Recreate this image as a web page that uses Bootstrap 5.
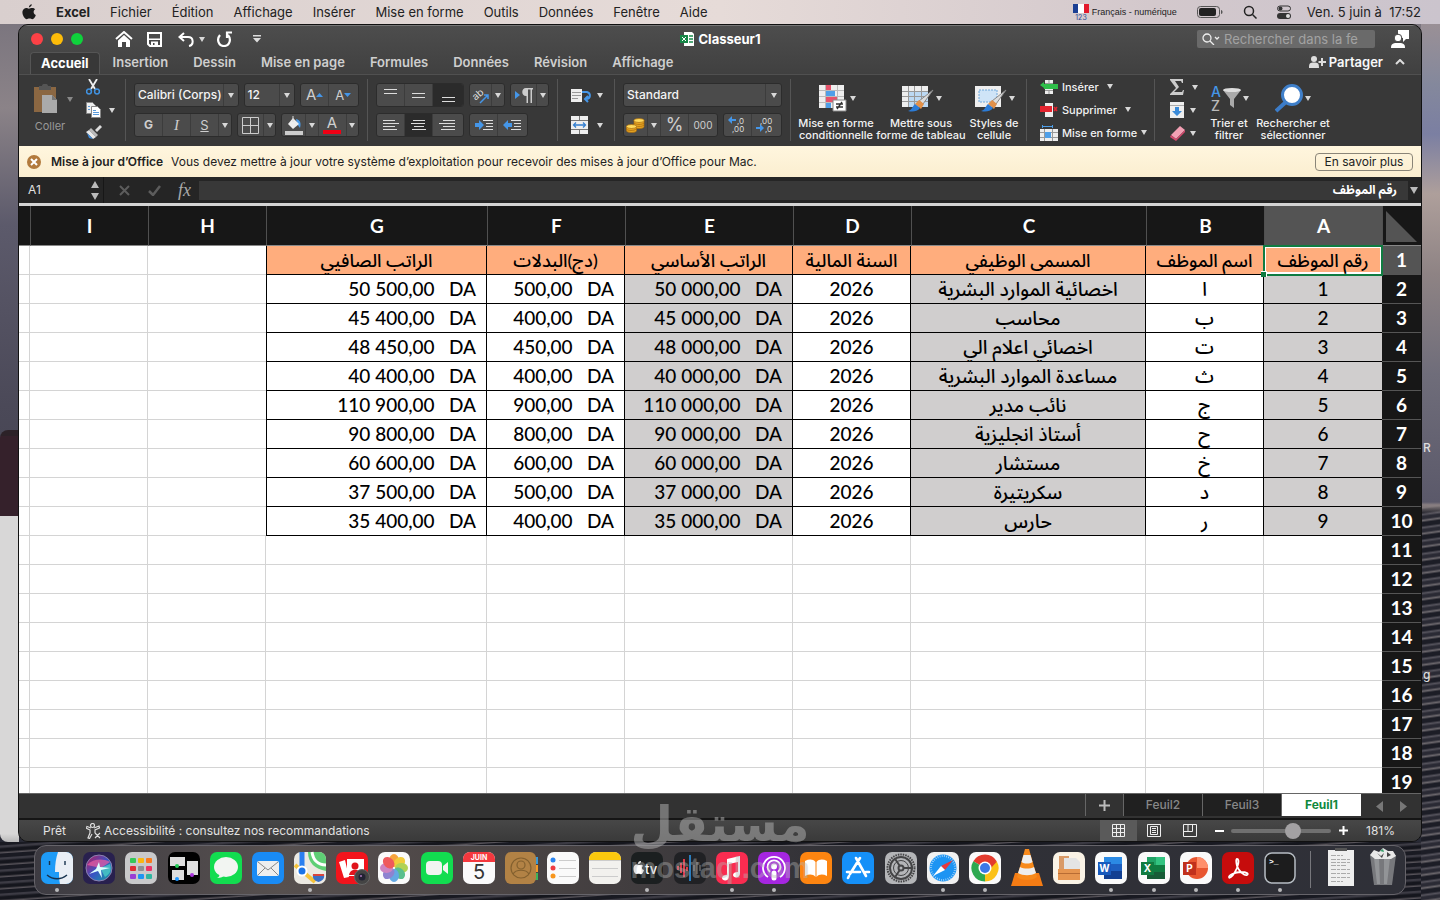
<!DOCTYPE html>
<html lang="fr">
<head>
<meta charset="utf-8">
<meta name="viewport" content="width=device-width, initial-scale=1">
<title>Classeur1</title>
<link href="https://cdn.jsdelivr.net/npm/bootstrap@5.3.0/dist/css/bootstrap.min.css" rel="stylesheet">
<script src="https://cdn.jsdelivr.net/npm/bootstrap@5.3.0/dist/js/bootstrap.bundle.min.js"></script>
<style>
body{font-family:Inter,"Liberation Sans",sans-serif;font-size:13px;line-height:16px;color:#222;height:100vh;overflow:hidden;
 background:linear-gradient(#77727c 0,#8b8388 12%,#5c5a6b 25%,#4b4958 45%,#3d3d4b 70%,#30303c 90%,#262833 94%,#17181f 100%)}
button{border:0;background:none;padding:0;color:inherit;font:inherit}
a{color:inherit;text-decoration:none}
svg{display:block;flex:none}
.menubar{height:24px;background:linear-gradient(90deg,#d9cfce,#e6dbd8 50%,#d3c8cc 80%,#cbc4cd);padding:0 19px 0 22px;gap:20px}
.lang{font-size:9px;font-family:"Liberation Sans",sans-serif}
.side-l,.side-r{position:absolute;z-index:-1;width:19px}
.side-l{left:0;top:430px;bottom:58px;border-radius:8px 0 0 8px;background:linear-gradient(#2c2228 0 6px,#35212b 6px 86px,#d8d7d7 86px 98%,#b9b9b9)}
.side-r{right:0;top:24px;bottom:0;background:linear-gradient(#9a9096 0,#84889c 60px,#7b7fa2 110px,#ae9f9b 170px,#8e8384 250px,#6f6d7a 350px,#5b596a 478px,#8a8082 481px,transparent 490px),repeating-linear-gradient(172deg,#1c1d26 0 3px,#55535c 5px,#2a2a34 7px 9px,#6b676c 11px,#1c1d26 13px);color:#ddd;font-size:12px;font-weight:500}
.side-r span{position:absolute;left:2px}
.sea{position:absolute;z-index:-2;left:0;right:0;bottom:0;height:58px;background:repeating-linear-gradient(176deg,#191a22 0 3px,#3c3b44 4px 5px,#15161d 7px 9px,#58545a 11px,#1c1d26 12px)}
.win{margin:0 18px;border:1px solid #111;border-radius:10px;overflow:hidden;background:#383838;color:#e8e8e8;min-height:0}
.head-a{background:linear-gradient(#4d4d4d,#404040);border-top:1px solid #777;border-bottom:1px solid #505050}
.title-row{height:25px;padding:1px 12px 0 12px}
.side{flex:1 0 0}
.light{width:12px;height:12px;border-radius:50%;margin-right:8px}
.tab-row{height:23px;padding:0 0 2px 11px;gap:25px;font-weight:600;color:#cfcfcf}
.tab-row .on{background:#383838;color:#fff;border:1px solid #555;border-bottom:0;border-radius:4px 4px 0 0;height:22px;padding:1px 10px 2px 10px;margin-right:-12px;margin-bottom:-3px;font-weight:700}
.search{width:178px;height:18px;background:#6a6a6a;border-radius:2px;padding-left:5px;margin-right:16px}
.search input{border:0;background:none;outline:0;padding:0;width:134px;font-size:13px;color:#fff;line-height:16px}
.search input::placeholder{color:#a2a2a2;opacity:1}
.ribbon{height:71px;background:#383838;font-size:12px}
.grp{height:62px;margin-top:4px;border-right:1px solid #555;padding:4px 8px 0;flex:none}
.rowx{display:flex;gap:5px;margin-bottom:6px}
.box{display:flex;height:24px;background:#4b4b4b;border:1px solid #2c2c2c;border-radius:3px;overflow:hidden}
.box>*{display:flex;align-items:center;justify-content:center;border-right:1px solid #3c3c3c}
.box>*:last-child{border-right:0}
.b29{width:28px;flex:none}.b12{width:12px;flex:1}
.dark{background:#2b2b2b}
.combo{font-size:12px;font-weight:500;color:#f4f4f4;justify-content:flex-start!important;padding-left:3px;white-space:nowrap;min-width:0}
.car{width:0;height:0;border:3px solid transparent;border-top:5px solid #d8d8d8;border-bottom:0;flex:none}
.g{font-size:15px;color:#cfcfcf}
.big{font-size:11px;line-height:12px;font-weight:500;text-align:center;color:#f2f2f2;flex:none;margin-top:-4px;align-self:flex-start}
.big .pic{height:38px;display:flex;align-items:center;justify-content:center;gap:2px}
.lst{font-size:11px;font-weight:500;color:#f2f2f2}
.lst button{display:flex;align-items:center;height:23px;gap:4px;white-space:nowrap}
.msg{height:31px;background:linear-gradient(#fff6de,#fbeed0);color:#222;font-size:12px;padding:0 8px}
.more{border:1px solid #8a8578;border-radius:4px;height:18px;width:98px;font-size:12px;line-height:14px}
.fbar{height:29px;background:#252525;border-bottom:3px solid #d4d4d4}
.fbar .nm{width:85px;border-right:1px solid #171717;font-size:12px;padding:0 4px 0 9px;color:#e0e0e0}
.fbar .in{background:#383838;border:0;color:#fff;height:19px;min-width:0;font-family:Lato,"Noto Sans Arabic",sans-serif;font-size:12px;font-weight:700;padding:0 11px;outline:0}
.sheet{background:#fff;min-height:0;flex:1 1 0;overflow:hidden}
.xl{table-layout:fixed;width:100%;border-collapse:separate;border-spacing:0;font-family:Lato,"Noto Sans Arabic","DejaVu Sans",sans-serif;font-size:19px;font-weight:500;line-height:28px;color:#000}
.xl td{height:29px;padding:0;border-right:1px solid #d4d4d4;border-bottom:1px solid #d4d4d4;text-align:center;white-space:pre;overflow:hidden}
.xl td:nth-child(2){border-right:0}
.xl th{background:#171717;color:#fff;font-weight:700;text-align:center;padding:0;border-bottom:1px solid #555}
.xl thead th{height:40px;border-left:1px solid #505050;border-bottom:1px solid #888}
.xl thead th:last-child{border-left:0}
.xl .sel{background:#545454}
.xl .dat td:nth-child(-n+8){border-color:#000;line-height:28px}
.xl .dat td:nth-child(9){border-right:0}
.xl .dat td:nth-child(8){border-left:1px solid #000}
.xl .dat td:nth-child(2),.xl .dat td:nth-child(4),.xl .dat td:nth-child(6){background:#d0cece}
.xl .top td:nth-child(-n+8){background:#ffad7d!important;font-size:18px}
.xl .dat:not(.top) td:nth-child(n+6):nth-child(-n+8){direction:ltr;text-align:right;padding-right:10px}
.xl .dat:not(.top) td:nth-child(6){padding-right:8px}
.xl .top td.cur{outline:2px solid #107c41;outline-offset:-1px;box-shadow:inset 0 0 0 2px #fff;position:relative;overflow:visible}
.cur i{position:absolute;left:-3px;bottom:-3px;width:6px;height:6px;background:#107c41;border:1px solid #fff;border-width:1px 1px 0 0}
.tabs{height:27px;background:#323232;border-top:1px solid #666;border-bottom:2px solid #151515;font-size:12px;color:#888;font-weight:500}
.tabs>button{height:22px;width:79px;background:#202020;border-right:1px solid #666}
.stat{height:21px;background:linear-gradient(#474747,#3a3a3a);font-size:12px;color:#e2e2e2;padding-right:26px}
.rng{appearance:none;width:100px;height:4px;background:#707070;border-radius:2px;margin:0 8px 0 7px}
.rng::-webkit-slider-thumb{appearance:none;width:16px;height:16px;border-radius:50%;background:#a3a1a3}
.dock{height:50px;margin:3px 34px 5px;border:1px solid #66646a;border-radius:12px;background:linear-gradient(90deg,#3d3b42,#57504f 18%,#4a4444 35%,#303036 60%,#2f3038);padding-left:1px}
.app{flex:1 0 0;display:flex;flex-direction:column;align-items:center;padding-top:5px;height:48px}
.app.run::after{content:"";width:4px;height:4px;border-radius:50%;background:#b9b9bb;margin-top:3px}
.dk{width:104px;flex:none}
.wm{position:absolute;left:50%;width:200px;margin-left:-100px;text-align:center;color:#b5b5b5;opacity:.5;pointer-events:none}
.wm-a{bottom:45px;font:700 49px/60px "DejaVu Sans",sans-serif}
.wm-b{bottom:18px;font:700 29px/28px "Liberation Sans",sans-serif;opacity:.4}
</style>
</head>
<body class="d-flex flex-column position-relative">
<div class="sea"></div><div class="side-l"></div><div class="side-r"><span style="top:416px">R</span><span style="top:643px">g</span></div>

<nav class="menubar d-flex align-items-center flex-shrink-0">
 <svg width="14" height="16" viewBox="0 0 14 16"><path fill="#1c1c1c" d="M9.8.2c.1 1.6-1.300 3.200-2.900 3.200C6.800 1.800 8.300.4 9.800.2zM13.200 5.300c-2.400 1.500-1.900 4.900.6 5.700-.5 1.700-1.900 4.300-3.400 4.300-1.200 0-1.500-.7-2.900-.7s-1.800.7-2.900.7C2.200 15.300-2 7.600 2.200 4.700c1.900-1.300 3.600 0 4.700 0 1 0 4.200-1.900 6.300.6z"/></svg>
 <a href="#" class="fw-bold">Excel</a><a href="#">Fichier</a><a href="#">Édition</a><a href="#">Affichage</a><a href="#">Insérer</a><a href="#">Mise en forme</a><a href="#">Outils</a><a href="#">Données</a><a href="#">Fenêtre</a><a href="#">Aide</a>
 <div class="ms-auto d-flex align-items-center" style="gap:3px">
  <svg width="16" height="18" viewBox="0 0 16 18"><path fill="#1b3f94" d="M0 1h5v9H0z"/><path fill="#fff" d="M5 1h6v9H5z"/><path fill="#e3192c" d="M11 1h5v9h-5z"/><text x="8" y="17" font-size="7" text-anchor="middle" fill="#2c4a94">123</text></svg>
  <span class="lang">Français - numérique</span></div>
 <svg width="26" height="12" viewBox="0 0 26 12"><rect x=".5" y=".5" width="22" height="11" rx="3" fill="none" stroke="#555"/><rect x="2" y="2" width="17" height="8" rx="2" fill="#222"/><path fill="#555" d="M24 4c2 0 2 4 0 4z"/></svg>
 <svg width="14" height="14" viewBox="0 0 14 14" fill="none" stroke="#222" stroke-width="1.500"><circle cx="6" cy="6" r="4.500"/><path d="m9.500 9.500 4 4"/></svg>
 <svg width="14" height="14" viewBox="0 0 14 14"><rect x=".5" y="1" width="13" height="5" rx="2.500" fill="none" stroke="#333"/><circle cx="3.500" cy="3.500" r="2" fill="#333"/><rect y="8" width="14" height="6" rx="3" fill="#333"/><circle cx="11" cy="11" r="2" fill="#ddd"/></svg>
 <span style="margin-left:-4px">Ven. 5 juin à&nbsp; 17:52</span>
</nav>

<main class="win d-flex flex-column flex-grow-1">
 <header class="head-a flex-shrink-0">
  <div class="title-row d-flex align-items-center">
   <div class="side d-flex align-items-center">
    <span class="light" style="background:#fc4146"></span><span class="light" style="background:#fdbc09"></span><span class="light" style="background:#0fd23c"></span>
    <button style="margin-left:24px" aria-label="Accueil"><svg width="18" height="16" viewBox="0 0 18 16"><path fill="none" stroke="#fff" stroke-width="2" d="m1 8 8-7 8 7"/><path fill="#fff" d="M3 9.500 9 4l6 5.500V16h-4v-5H7v5H3z"/></svg></button>
    <button style="margin-left:14px" aria-label="Enregistrer"><svg width="15" height="15" viewBox="0 0 15 15"><path fill="none" stroke="#fff" stroke-width="2" d="M1 1h13v13H3l-2-2z"/><path fill="#fff" d="M1 6.500h13V8H1zM4 9.500h7V14H7.500v-3H6v3H4z"/></svg></button>
    <button class="d-flex align-items-center" style="margin-left:16px;gap:5px" aria-label="Annuler"><svg width="16" height="15" viewBox="0 0 16 15" fill="none" stroke="#fff" stroke-width="2"><path d="M6 1 1.500 5 6 9M2 5h8c6 0 6 8 1 9"/></svg><span class="car"></span></button>
    <button style="margin-left:12px" aria-label="Répéter"><svg width="16" height="16" viewBox="0 0 16 16" fill="none" stroke="#fff" stroke-width="2.200"><path d="M3 4c-4 5-1 11 4 11s8-6 4-11M15 1.500h-5V7"/></svg></button>
    <button style="margin-left:20px" aria-label="Personnaliser"><svg width="8" height="8" viewBox="0 0 8 8" fill="#ddd"><path d="M0 0h8v1.500H0zM0 3h8L4 7.500z"/></svg></button>
   </div>
   <div class="d-flex align-items-center fw-bold text-white" style="gap:5px"><svg width="14" height="14" viewBox="0 0 14 14"><path fill="#fff" d="M4 0h8l2 2v12H4z"/><path fill="#51a879" d="M9 3h4v2H9zm0 3h4v2H9zm0 3h4v2H9z"/><path fill="#178748" d="M0 3h8v8H0z"/><path stroke="#fff" d="m2 5 4 4m0-4L2 9"/></svg>Classeur1</div>
   <div class="side d-flex align-items-center justify-content-end">
    <label class="search d-flex align-items-center"><svg width="18" height="12" viewBox="0 0 18 12" fill="none" stroke="#eee" stroke-width="1.300"><circle cx="5" cy="5" r="4"/><path d="m8 8 4 4M13 4l2 2 2-2"/></svg><input class="ms-1" placeholder="Rechercher dans la fe" aria-label="Rechercher dans la feuille"></label>
    <svg width="18" height="18" viewBox="0 0 18 18" fill="#fff"><path d="M7 0h11v9h-3l-3 3V8H7z"/><circle cx="7" cy="8" r="3.800" stroke="#444"/><path d="M0 18c0-5 3-5 7-5s7 0 7 5z"/></svg>
   </div>
  </div>
  <div class="tab-row d-flex align-items-center">
   <button class="on">Accueil</button><button>Insertion</button><button>Dessin</button><button>Mise en page</button><button>Formules</button><button>Données</button><button>Révision</button><button>Affichage</button>
   <button class="ms-auto d-flex align-items-center text-light" style="gap:3px;margin-right:-13px"><svg width="17" height="12" viewBox="0 0 17 12" fill="#ddd"><circle cx="5" cy="3" r="3"/><path d="M0 12c0-5 1-5.500 5-5.500s5 .500 5 5.500zM12 2h2v3h3v2h-3v3h-2V7H9.500V5H12z"/></svg>Partager</button>
   <svg class="me-3" width="10" height="6" viewBox="0 0 10 6" fill="none" stroke="#ddd" stroke-width="2"><path d="m1 5 4-4 4 4"/></svg>
  </div>
 </header>

 <section class="ribbon d-flex flex-shrink-0">
  <div class="grp d-flex" style="width:107px;padding-left:14px">
   <button style="width:36px;color:#999;font-size:11px;margin-top:-6px" class="text-center"><span class="d-flex align-items-center" style="gap:8px"><svg width="26" height="30" viewBox="0 0 26 30"><path fill="#8b6742" d="M1 3h22v25H1z"/><path fill="#555" d="M6 6V2h3c0-3 6-3 6 0h3v4z"/><path fill="#aaa" d="M9 11h10l5 5v13H9z"/><path fill="#777" d="M19 11v5h5z"/></svg><span class="car opacity-50"></span></span><span class="d-block mt-1" style="width:34px">Coller</span></button>
   <div class="d-flex flex-column align-items-start" style="margin-left:17px;gap:7px;margin-top:-4px">
    <svg width="14" height="16" viewBox="0 0 14 16" fill="none"><path stroke="#eee" stroke-width="1.800" d="m3 0 6 10M11 0 5 10"/><g stroke="#4092e0" stroke-width="1.500"><circle cx="3" cy="12.500" r="2.400"/><circle cx="11" cy="12.500" r="2.400"/></g></svg>
    <span class="d-flex align-items-center" style="gap:8px"><svg width="15" height="16" viewBox="0 0 15 16" stroke="#888"><path fill="#eee" d="M.5.5h6l3 3v8h-9z"/><path fill="#fff" d="M5.500 4.500h6l3 3v8h-9z"/><path stroke="#5a9bdc" d="M7 8.500h3m-3 2h6m-6 2h6M2 4.500h2m-2 3h2"/></svg><span class="car"></span></span>
    <svg width="16" height="14" viewBox="0 0 16 14"><path fill="#ddd" d="m9 5 5-5 2 2-5 5z"/><path fill="#bbb" d="m5 3 7 7-2 2-7-7z"/><path fill="#e9e9e9" d="m3 5 7 7-3 2L0 7z"/><path fill="#3f8ee0" d="m1 8 6 6-4-1z"/></svg>
   </div>
  </div>
  <div class="grp" style="width:242px">
   <div class="rowx">
    <div class="box" style="width:105px"><button class="combo flex-grow-1">Calibri (Corps)</button><button style="width:14px" aria-label="Police"><span class="car"></span></button></div>
    <div class="box" style="width:52px"><button class="combo flex-grow-1">12</button><button style="width:14px" aria-label="Taille"><span class="car"></span></button></div>
    <div class="box" style="width:59px"><button class="b29 g">A<svg width="7" height="4"><path fill="#4596e8" d="M0 4h7L3.500 0z"/></svg></button><button class="b29 g" style="font-size:13px">A<svg width="7" height="4"><path fill="#4596e8" d="M0 0h7L3.500 4z"/></svg></button></div>
   </div>
   <div class="rowx">
    <div class="box" style="width:98px"><button class="b29 g fw-bold" style="font-size:12px">G</button><button class="b29 g fst-italic" style="font-family:'Liberation Serif',serif">I</button><button class="b29 g text-decoration-underline" style="font-size:13px">S</button><button class="b12" aria-label="Souligner"><span class="car"></span></button></div>
    <div class="box" style="width:39px"><button class="b29" style="width:26px" aria-label="Bordures"><svg width="17" height="17" viewBox="0 0 17 17" fill="none" stroke="#ccc"><path d="M.5.5h16v16H.5zM8.500 0v17M0 8.500h17"/></svg></button><button class="b12" aria-label="Options"><span class="car"></span></button></div>
    <div class="box" style="width:78px"><button class="b29" style="width:24px" aria-label="Remplissage"><svg width="18" height="19" viewBox="0 0 18 19"><path fill="#ccc" d="M0 15h18v4H0z"/><path fill="#4b9be8" d="M11 3c5 1 5 5 4 9l-3-4z"/><path fill="#eee" d="m8 2 6 6-6 5-5-5z"/><path stroke="#ddd" d="M8 0v6"/></svg></button><button class="b12" aria-label="Options"><span class="car"></span></button><button class="b29 g flex-column" style="line-height:14px">A<span style="width:18px;height:4px;background:#f00014"></span></button><button class="b12" aria-label="Options"><span class="car"></span></button></div>
   </div>
  </div>
  <div class="grp" style="width:190px">
   <div class="rowx">
    <div class="box" style="width:88px"><button class="b29" aria-label="Haut"><svg width="13" height="18" stroke="#ddd"><path d="M0 3.500h13M0 7.500h13"/></svg></button><button class="b29" aria-label="Milieu"><svg width="13" height="18" stroke="#ddd"><path d="M0 7.500h13M0 11.500h13"/></svg></button><button class="b29 dark flex-fill" aria-label="Bas"><svg width="13" height="18" stroke="#ddd"><path d="M0 11.500h13M0 15.500h13"/></svg></button></div>
    <div class="box" style="width:36px"><button style="width:22px" aria-label="Orientation"><svg width="20" height="20" viewBox="0 0 20 20"><text x="2" y="13" font-size="10" fill="#ddd" transform="rotate(-40 7 11)">ab</text><path stroke="#4596e8" stroke-width="1.500" d="m9 18 8-8m-4 0h4v4" fill="none"/></svg></button><button class="b12 border-0" aria-label="Options"><span class="car"></span></button></div>
    <div class="box" style="width:39px"><button class="b29" style="width:26px" aria-label="Sens du texte"><svg width="18" height="15" viewBox="0 0 18 15"><path fill="#4596e8" d="m0 3 5 4-5 4z"/><path fill="#ccc" d="M11 8c-5 0-5-8 0-8h7v1.500h-1V15h-1.500V1.500H13V15h-1.500V8z"/></svg></button><button class="b12" aria-label="Options"><span class="car"></span></button></div>
   </div>
   <div class="rowx">
    <div class="box" style="width:88px"><button class="b29" aria-label="Gauche"><svg width="16" height="12" stroke="#ddd"><path d="M0 1.500h12M0 4.500h16M0 7.500h12M0 10.500h14"/></svg></button><button class="b29 dark" aria-label="Centre"><svg width="16" height="12" stroke="#ddd"><path d="M2 1.500h12M0 4.500h14M3 7.500h10M1 10.500h14"/></svg></button><button class="b29" aria-label="Droite"><svg width="16" height="12" stroke="#ddd"><path d="M4 1.500h12M0 4.500h16M4 7.500h12M2 10.500h14"/></svg></button></div>
    <div class="box" style="width:59px"><button class="b29" aria-label="Retrait"><svg width="18" height="12" stroke="#ddd"><path stroke="none" fill="#4596e8" d="M0 4h4V1l5 5-5 5V8H0z"/><path d="M8 1.500h10M11 4.500h7M11 7.500h7M8 10.500h10"/></svg></button><button class="b29" aria-label="Retrait négatif"><svg width="18" height="12" stroke="#ddd"><path stroke="none" fill="#4596e8" d="M9 4H5V1L0 6l5 5V8h4z"/><path d="M8 1.500h10M11 4.500h7M11 7.500h7M8 10.500h10"/></svg></button></div>
   </div>
  </div>
  <div class="grp d-flex flex-column" style="width:57px;padding-left:13px;gap:6px">
   <button class="d-flex align-items-center" style="gap:5px;height:24px" aria-label="Renvoyer"><svg width="21" height="15" viewBox="0 0 21 15"><path fill="#eee" d="M0 1h11v13H0z"/><path stroke="#999" d="M1 4.500h9m-9 3h9m-9 3h6"/><path fill="none" stroke="#4596e8" stroke-width="2" d="M11 4h5c4 1 4 7-1 7m2-3-3 3 3 3"/></svg><span class="car"></span></button>
   <button class="d-flex align-items-center" style="gap:9px;height:24px" aria-label="Fusionner"><svg width="17" height="18" viewBox="0 0 17 18"><path fill="#eee" d="M0 0h17v18H0z"/><path stroke="#777" d="M0 4.500h17M0 13.500h17M8.500 0v4M8.500 14v4"/><path fill="none" stroke="#357fd0" stroke-width="1.300" d="M3 9h11M5 6.500 2.500 9 5 11.500m7-5L14.500 9 12 11.500"/></svg><span class="car"></span></button>
  </div>
  <div class="grp" style="width:176px">
   <div class="rowx"><div class="box" style="width:159px"><button class="combo flex-grow-1">Standard</button><button style="width:15px" aria-label="Format"><span class="car"></span></button></div></div>
   <div class="rowx">
    <div class="box" style="width:95px"><button class="b29" style="width:24px" aria-label="Monétaire"><svg width="19" height="15" viewBox="0 0 19 15" stroke="#a86c10" stroke-width=".700"><path fill="#e5a321" d="M8 2v7c1 2 9 2 10 0V2z"/><ellipse cx="13" cy="2.500" rx="5" ry="2" fill="#ffd95c"/><path fill="none" d="M8 5c2 2 8 2 10 0M8 7c2 2 8 2 10 0"/><path fill="#e5a321" d="M.5 8v5c1 2 9 2 10 0V8z"/><ellipse cx="5.500" cy="8.500" rx="5" ry="2" fill="#ffd95c"/><path fill="none" d="M0 11c2 2 8 2 10 0"/></svg></button><button class="b12" aria-label="Options"><span class="car"></span></button><button class="b29 g" style="font-size:18px">%</button><button class="b29 g" style="font-size:10px">000</button></div>
    <div class="box" style="width:59px"><button class="b29" aria-label="Ajouter une décimale"><svg width="20" height="18" viewBox="0 0 20 18"><path fill="#4596e8" d="M8 3H4V0L0 4l4 4V5h4z"/><g font-size="8" fill="#ddd"><text x="9" y="8">,0</text><text x="4" y="16">,00</text></g></svg></button><button class="b29" aria-label="Réduire les décimales"><svg width="20" height="18" viewBox="0 0 20 18"><path fill="#4596e8" d="M0 11h4V8l4 4-4 4v-3H0z"/><g font-size="8" fill="#ddd"><text x="4" y="8">,00</text><text x="9" y="16">,0</text></g></svg></button></div>
   </div>
  </div>
  <div class="grp d-flex" style="width:236px;padding-left:5px;padding-right:0">
   <button class="big" style="width:80px"><span class="pic"><svg width="31" height="28" viewBox="0 0 31 28"><path fill="#eee" d="M2 1h25v23H2z"/><path fill="#e5536b" d="M8 1h6v5H8zm0 11h13v6H8z"/><path fill="#4f9fe8" d="M8 6h10v6H8zm0 12h6v6H8z"/><path stroke="#bbb" d="M2 6.500h25M2 12.500h25M2 18.500h25M8.500 1v23M20.500 1v23"/><path fill="#fff" stroke="#888" d="M16 16h13v11H16z"/><path stroke="#333" stroke-width="1.300" d="M19 20h7m-7 3h7m-1-5-5 7"/></svg><span class="car"></span></span>Mise en forme conditionnelle</button>
   <button class="big" style="width:90px"><span class="pic"><svg width="33" height="28" viewBox="0 0 33 28"><path fill="#eee" d="M1 2h26v21H1z"/><path fill="#bcd9f4" d="M8 7h19v16H8z"/><path stroke="#999" d="M1 7.500h26M1 12.500h26M1 17.500h26M7.500 2v21M13.500 2v21M20.500 2v21"/><path fill="#ddd" stroke="#888" d="M32 6 22 20l-4-3z"/><path fill="#e2914a" d="m18 16 5 4-3 5-6-5z"/><path fill="#2b7bd6" d="m14 20 5 4c-3 4-8 4-12 3 4-1 4-4 7-7z"/></svg><span class="car"></span></span>Mettre sous forme&nbsp;de&nbsp;tableau</button>
   <button class="big" style="width:56px"><span class="pic"><svg width="33" height="28" viewBox="0 0 33 28"><path fill="#eee" d="M1 2h26v21H1z"/><path fill="#cfe4f7" stroke="#6fa8dc" stroke-dasharray="2 1" d="M5 6h18v12H5z"/><path fill="#ddd" stroke="#888" d="M32 6 22 20l-4-3z"/><path fill="#e2914a" d="m18 16 5 4-3 5-6-5z"/><path fill="#2b7bd6" d="m14 20 5 4c-3 4-8 4-12 3 4-1 4-4 7-7z"/></svg><span class="car"></span></span>Styles&nbsp;de cellule</button>
  </div>
  <div class="grp lst" style="width:128px;padding:0 0 0 13px">
   <div style="margin-top:-4px">
   <button><svg width="18" height="14" viewBox="0 0 18 14"><path fill="#eee" d="M5 0h8v14H5z"/><path fill="#2fbf4a" d="M0 5l4-3v2h14v5H4V8z"/><path stroke="#999" d="M5 3.500h8M5 10.500h8M9 0v3m0 8v3"/></svg>Insérer <span class="car ms-1"></span></button>
   <button><svg width="18" height="14" viewBox="0 0 18 14"><path fill="#eee" d="M5 0h8v14H5z"/><path fill="#e3242f" d="M0 3h12v6H0z"/><path stroke="#e3242f" stroke-width="1.500" d="m14 4 3 4m0-4-3 4"/></svg>Supprimer <span class="car ms-1"></span></button>
   <button><svg width="18" height="16" viewBox="0 0 18 16"><path fill="#eee" d="M0 4h18v12H0z"/><path stroke="#999" d="M4.500 4v12M12.500 4v12M0 7.500h18M0 12.500h18"/><path fill="#4f9fe8" d="M5 7h6v6H5z"/><path stroke="#4f9fe8" d="M2 1.500h11M2.500 0v3M12.500 0v3"/></svg>Mise en forme<span class="car"></span></button>
   </div>
  </div>
  <div class="d-flex" style="padding:8px 0 0 15px">
   <div class="d-flex flex-column" style="width:34px;gap:7px;margin-top:-4px">
    <span class="d-flex align-items-center" style="gap:8px;height:16px"><svg width="14" height="16" viewBox="0 0 14 16"><path fill="#ccc" d="M0 0h13v4h-1l-1-2H5l4 6-5 5h8l1-2h1l-1 5H0v-1l6-6-6-8z"/></svg><span class="car"></span></span>
    <span class="d-flex align-items-center" style="gap:6px;height:16px"><svg width="14" height="16" viewBox="0 0 14 16"><path fill="#eee" d="M0 0h14v16H0z"/><path stroke="#aaa" d="M0 3.500h14"/><path fill="#3a8ad8" d="M5 5h4v4h3l-5 5-5-5h3z"/></svg><span class="car"></span></span>
    <span class="d-flex align-items-center" style="gap:5px;height:16px"><svg width="15" height="15" viewBox="0 0 15 15"><path fill="#f3a0b4" d="m10 0 5 4-9 9-5-4z"/><path fill="#d5486d" d="m1 9 5 4v2L0 11zM15 4v2l-9 9v-2z"/></svg><span class="car"></span></span>
   </div>
   <button class="big" style="width:50px"><span class="pic"><svg width="31" height="28" viewBox="0 0 31 28"><g font-size="14"><text x="1" y="13" fill="#4596e8">A</text><text x="1" y="27" fill="#bbb">Z</text></g><path fill="#aaa" d="M13 6h18l-7 9v9l-4-3v-6z"/><ellipse cx="22" cy="6" rx="9" ry="2" fill="#ddd"/></svg><span class="car"></span></span>Trier&nbsp;et filtrer</button>
   <button class="big" style="width:78px"><span class="pic"><svg width="28" height="29" viewBox="0 0 28 29"><path stroke="#3c7cc8" stroke-width="4" d="M1 27 12 17"/><circle cx="17" cy="11" r="9.500" fill="#fff" stroke="#3f7fc9" stroke-width="3"/></svg><span class="car"></span></span>Rechercher&nbsp;et sélectionner</button>
  </div>
 </section>

 <div class="msg d-flex align-items-center flex-shrink-0">
  <svg width="14" height="14" viewBox="0 0 14 14"><circle cx="7" cy="7" r="7" fill="#b27a3d"/><path stroke="#fff" stroke-width="2" d="m4 4 6 6m0-6-6 6"/></svg>
  <span class="fw-semibold" style="margin:0 8px 0 10px">Mise à jour d’Office</span><span>Vous devez mettre à jour votre système d’exploitation pour recevoir des mises à jour d’Office pour Mac.</span>
  <button class="more ms-auto">En savoir plus</button>
 </div>

 <div class="fbar d-flex align-items-center flex-shrink-0">
  <div class="nm d-flex align-items-center align-self-stretch"><span>A1</span><svg class="ms-auto" width="8" height="19" fill="#bbb"><path d="M0 7h8L4 0zM0 12h8l-4 7z"/></svg></div>
  <svg style="margin-left:15px" width="11" height="11" stroke="#5c5c5c" stroke-width="2"><path d="m1 1 9 9m0-9-9 9"/></svg>
  <svg style="margin-left:18px" width="13" height="11" fill="none" stroke="#5c5c5c" stroke-width="2.500"><path d="m1 6 4 4 7-9"/></svg>
  <span style="margin:0 8px 0 17px;font:italic 18px/18px 'Liberation Serif',serif;color:#aaa">fx</span>
  <input class="in flex-grow-1" dir="rtl" value="رقم الموظف" aria-label="Barre de formule">
  <svg style="margin:0 3px 0 2px" width="8" height="7" fill="#bbb"><path d="M0 0h8L4 7z"/></svg>
 </div>

 <div class="sheet">
 <table class="xl" dir="rtl">
  <colgroup><col style="width:39px"><col style="width:118px"><col style="width:118px"><col style="width:235px"><col style="width:118px"><col style="width:168px"><col style="width:138px"><col style="width:221px"><col style="width:118px"><col style="width:118px"><col></colgroup>
  <thead><tr><th><svg width="37" height="36" viewBox="0 0 37 36"><path fill="#545454" d="M2 3v31h31z"/></svg></th><th class="sel">A</th><th>B</th><th>C</th><th>D</th><th>E</th><th>F</th><th>G</th><th>H</th><th>I</th><th></th></tr></thead>
  <tbody>
  <tr class="dat top"><th class="sel">1</th><td class="cur">رقم الموظف<i></i></td><td>اسم الموظف</td><td>المسمى الوظيفي</td><td>السنة المالية</td><td>الراتب الأساسي</td><td>(دج)البدلات</td><td>الراتب الصافيي</td><td></td><td></td><td></td></tr>
  <tr class="dat"><th>2</th><td>1</td><td>ا</td><td>اخصائية الموارد البشرية</td><td>2026</td><td>50 000,00   DA</td><td>500,00   DA</td><td>50 500,00   DA</td><td></td><td></td><td></td></tr>
  <tr class="dat"><th>3</th><td>2</td><td>ب</td><td>محاسب</td><td>2026</td><td>45 000,00   DA</td><td>400,00   DA</td><td>45 400,00   DA</td><td></td><td></td><td></td></tr>
  <tr class="dat"><th>4</th><td>3</td><td>ت</td><td>اخصائي اعلام الي</td><td>2026</td><td>48 000,00   DA</td><td>450,00   DA</td><td>48 450,00   DA</td><td></td><td></td><td></td></tr>
  <tr class="dat"><th>5</th><td>4</td><td>ث</td><td>مساعدة الموارد البشرية</td><td>2026</td><td>40 000,00   DA</td><td>400,00   DA</td><td>40 400,00   DA</td><td></td><td></td><td></td></tr>
  <tr class="dat"><th>6</th><td>5</td><td>ج</td><td>نائب مدير</td><td>2026</td><td>110 000,00   DA</td><td>900,00   DA</td><td>110 900,00   DA</td><td></td><td></td><td></td></tr>
  <tr class="dat"><th>7</th><td>6</td><td>ح</td><td>أستاذ انجليزية</td><td>2026</td><td>90 000,00   DA</td><td>800,00   DA</td><td>90 800,00   DA</td><td></td><td></td><td></td></tr>
  <tr class="dat"><th>8</th><td>7</td><td>خ</td><td>مستشار</td><td>2026</td><td>60 000,00   DA</td><td>600,00   DA</td><td>60 600,00   DA</td><td></td><td></td><td></td></tr>
  <tr class="dat"><th>9</th><td>8</td><td>د</td><td>سكريتيرة</td><td>2026</td><td>37 000,00   DA</td><td>500,00   DA</td><td>37 500,00   DA</td><td></td><td></td><td></td></tr>
  <tr class="dat"><th>10</th><td>9</td><td>ر</td><td>حارس</td><td>2026</td><td>35 000,00   DA</td><td>400,00   DA</td><td>35 400,00   DA</td><td></td><td></td><td></td></tr>
  <tr><th>11</th><td></td><td></td><td></td><td></td><td></td><td></td><td></td><td></td><td></td><td></td></tr>
  <tr><th>12</th><td></td><td></td><td></td><td></td><td></td><td></td><td></td><td></td><td></td><td></td></tr>
  <tr><th>13</th><td></td><td></td><td></td><td></td><td></td><td></td><td></td><td></td><td></td><td></td></tr>
  <tr><th>14</th><td></td><td></td><td></td><td></td><td></td><td></td><td></td><td></td><td></td><td></td></tr>
  <tr><th>15</th><td></td><td></td><td></td><td></td><td></td><td></td><td></td><td></td><td></td><td></td></tr>
  <tr><th>16</th><td></td><td></td><td></td><td></td><td></td><td></td><td></td><td></td><td></td><td></td></tr>
  <tr><th>17</th><td></td><td></td><td></td><td></td><td></td><td></td><td></td><td></td><td></td><td></td></tr>
  <tr><th>18</th><td></td><td></td><td></td><td></td><td></td><td></td><td></td><td></td><td></td><td></td></tr>
  <tr><th>19</th><td></td><td></td><td></td><td></td><td></td><td></td><td></td><td></td><td></td><td></td></tr>
  </tbody>
 </table>
 </div>

 <div class="tabs d-flex flex-shrink-0 justify-content-end">
  <button style="width:39px;background:none;border-left:1px solid #666" aria-label="Ajouter une feuille"><svg class="mx-auto" width="11" height="11" stroke="#bbb" stroke-width="2"><path d="M0 5.500h11M5.500 0v11"/></svg></button>
  <button>Feuil2</button><button>Feuil3</button><button class="bg-white fw-bold border-0" style="color:#10893e">Feuil1</button>
  <svg style="margin:7px 14px 0 15px" width="31" height="11" fill="#777"><path d="M7 0v11L0 5.500zM24 0v11l7-5.500z"/></svg>
 </div>
 <footer class="stat d-flex align-items-center flex-shrink-0">
  <span style="margin-left:24px">Prêt</span>
  <svg style="margin:0 3px 0 20px" width="15" height="16" viewBox="0 0 15 16" fill="none" stroke="#ddd" stroke-width="1.200"><circle cx="6.500" cy="2.500" r="2"/><path d="M5 5 1 3.500 0 5l4 2v3l-2 5 1.500.500L6 11M8 5l5-2 .5 2L9 7v3m0 0 5 5m0-5-5 5"/></svg>
  <a href="#">Accessibilité : consultez nos recommandations</a>
  <button class="ms-auto d-flex align-items-center justify-content-center" style="width:37px;height:21px;background:#5a5a5a" aria-label="Normal"><svg width="13" height="13" fill="none" stroke="#eee"><path d="M.5.5h12v12H.5zM4.500 0v13M8.500 0v13M0 4.500h13M0 8.500h13"/></svg></button>
  <button style="margin-left:10px" aria-label="Mise en page"><svg width="14" height="13" fill="none" stroke="#eee"><path d="M.5.5h13v12H.5zM3.500 2.500h7v8h-7zM5 4.500h4M5 6.500h4M5 8.500h4"/></svg></button>
  <button style="margin-left:22px" aria-label="Sauts de page"><svg width="14" height="13" fill="none" stroke="#eee"><path d="M.5.5h13v12H.5zM.5 7.500h9V.5M5 0v7"/></svg></button>
  <svg style="margin-left:18px" width="9" height="10" stroke="#fff" stroke-width="2"><path d="M0 5h9"/></svg>
  <input class="rng" type="range" value="64" aria-label="Zoom">
  <svg width="9" height="9" stroke="#fff" stroke-width="2"><path d="M0 4.500h9M4.500 0v9"/></svg>
  <span style="margin-left:18px">181%</span>
 </footer>
</main>

<footer class="dock d-flex flex-shrink-0">
 <div class="d-flex flex-grow-1">
 <div class="app run"><svg width="34" height="34" viewBox="0 0 34 34"><rect x="1" y="1" width="32" height="32" rx="7" fill="#1e9bf7"/><path fill="#e9eef5" d="M18 1h8a7 7 0 0 1 7 7v18a7 7 0 0 1-7 7h-6c-1-4-1-9-1-12h-4c0-8 1-14 3-20z"/><path fill="none" stroke="#17324e" stroke-width="1.400" d="M7 24c6 5 14 5 20 0M9.500 10v4M25 10v4"/></svg></div>
 <div class="app"><svg width="34" height="34" viewBox="0 0 34 34"><defs><linearGradient id="si" x1="0" y1="0" x2="1" y2="1"><stop stop-color="#c2185b"/><stop offset=".5" stop-color="#3a52c4"/><stop offset="1" stop-color="#10a6a0"/></linearGradient></defs><rect x="1" y="1" width="32" height="32" rx="7" fill="#28204e"/><circle cx="17" cy="17" r="13" fill="url(#si)" stroke="#8a80b0"/><path fill="#ef5ca0" d="M5 14c6-6 15-7 23-3l-9 6z" opacity=".7"/><path fill="#4fd8c8" d="M28 13c2 6 0 10-5 13l-5-9z" opacity=".7"/><path fill="#dff" d="m17 11 1 5 10 1-9 2 1 8-4-7-9 3 7-5z"/></svg></div>
 <div class="app"><svg width="34" height="34" viewBox="0 0 34 34"><rect x="1" y="1" width="32" height="32" rx="7" fill="#c9c9cb"/><rect x="6" y="7" width="6" height="5" rx="1" fill="#35c759"/><rect x="14" y="7" width="6" height="5" rx="1" fill="#f9b613"/><rect x="22" y="7" width="6" height="5" rx="1" fill="#fb7a1d"/><rect x="6" y="15" width="6" height="5" rx="1" fill="#e02b35"/><rect x="14" y="15" width="6" height="5" rx="1" fill="#8e8e93"/><rect x="22" y="15" width="6" height="5" rx="1" fill="#ec3366"/><rect x="6" y="23" width="6" height="5" rx="1" fill="#9a3fd5"/><rect x="14" y="23" width="6" height="5" rx="1" fill="#1f94f2"/><rect x="22" y="23" width="6" height="5" rx="1" fill="#30b5a0"/></svg></div>
 <div class="app"><svg width="34" height="34" viewBox="0 0 34 34"><rect x="1" y="1" width="32" height="32" rx="7"/><path fill="#ddd" d="M3 6h15v9H3zM20 10h11v14H20zM5 19h12v10H5z"/><circle cx="10" cy="15" r="2" fill="#2c5"/><circle cx="25" cy="24" r="2" fill="#a3d"/><circle cx="10" cy="28" r="2" fill="#29f"/></svg></div>
 <div class="app"><svg width="34" height="34" viewBox="0 0 34 34"><rect x="1" y="1" width="32" height="32" rx="7" fill="#12dc50"/><ellipse cx="17" cy="16" rx="12" ry="10" fill="#f2f5f2"/><path fill="#f2f5f2" d="M10 22c1 3 0 4-2 5 4 0 6-1 8-3z"/></svg></div>
 <div class="app"><svg width="34" height="34" viewBox="0 0 34 34"><rect x="1" y="1" width="32" height="32" rx="7" fill="#198bf5"/><rect x="6" y="10" width="22" height="15" rx="2" fill="#eee"/><path fill="none" stroke="#888" d="m7 11 10 8 10-8M7 24l7-7m13 7-7-7"/></svg></div>
 <div class="app run"><svg width="34" height="34" viewBox="0 0 34 34"><rect x="1" y="1" width="32" height="32" rx="7" fill="#ece9e2"/><path fill="#5fcf75" d="M15 1h11a7 7 0 0 1 7 7v12C22 18 15 12 15 1z"/><path fill="none" stroke="#fff" stroke-width="3" d="M19 1c1 8 6 13 14 13"/><path stroke="#f6c33a" stroke-width="4" d="m2 14 20 17"/><path stroke="#2a7ff0" stroke-width="5" d="M9 1v18"/><circle cx="9" cy="20" r="4.500" fill="#1a73e8" stroke="#fff" stroke-width="2"/><path fill="#3a6fc4" d="M20 23h11c1 5-2 7-5.500 8C22 30 19 28 20 23z"/><path fill="#d9443c" d="M20 23h11v2H20z"/></svg></div>
 <div class="app"><svg width="36" height="34" viewBox="-1 0 36 34"><rect x="1" y="1" width="32" height="32" rx="7" fill="#f2141c"/><path fill="#fff" d="m4 11 6-2 4 17-5 1zM12 8h17v17H12z"/><circle cx="20" cy="15" r="3.500" fill="#e0141c"/><path fill="#e0141c" d="M14 24c1-7 11-7 12 0z"/><circle cx="27" cy="26" r="7.500" fill="#444" stroke="#666"/><circle cx="27" cy="26" r="3.500" fill="#223"/><circle cx="26" cy="25" r="1" fill="#a7b"/></svg></div>
 <div class="app"><svg width="34" height="34" viewBox="0 0 34 34"><rect x="1" y="1" width="32" height="32" rx="7" fill="#fafafa"/><g opacity=".85"><ellipse cx="17" cy="9.500" rx="5" ry="6.500" fill="#f8961d"/><ellipse cx="17" cy="9.500" rx="5" ry="6.500" fill="#f0c51b" transform="rotate(45 17 17)"/><ellipse cx="17" cy="9.500" rx="5" ry="6.500" fill="#a5cc39" transform="rotate(90 17 17)"/><ellipse cx="17" cy="9.500" rx="5" ry="6.500" fill="#3fb57c" transform="rotate(135 17 17)"/><ellipse cx="17" cy="9.500" rx="5" ry="6.500" fill="#4a9be0" transform="rotate(180 17 17)"/><ellipse cx="17" cy="9.500" rx="5" ry="6.500" fill="#7c6fc9" transform="rotate(225 17 17)"/><ellipse cx="17" cy="9.500" rx="5" ry="6.500" fill="#c770b8" transform="rotate(270 17 17)"/><ellipse cx="17" cy="9.500" rx="5" ry="6.500" fill="#ee3f41" transform="rotate(315 17 17)"/></g></svg></div>
 <div class="app"><svg width="34" height="34" viewBox="0 0 34 34"><rect x="1" y="1" width="32" height="32" rx="7" fill="#12dc50"/><rect x="6" y="10" width="16" height="14" rx="4" fill="#f1f4f1"/><path fill="#f1f4f1" d="m23 15 5-4v12l-5-4z"/></svg></div>
 <div class="app"><svg width="34" height="34" viewBox="0 0 34 34"><rect x="1" y="1" width="32" height="32" rx="7" fill="#fafafa"/><path fill="#f4383e" d="M1 11V8a7 7 0 0 1 7-7h18a7 7 0 0 1 7 7v3z"/><text x="17" y="9" font-size="7" font-weight="700" fill="#fff" text-anchor="middle">JUIN</text><text x="17" y="28" font-size="20" fill="#333" text-anchor="middle">5</text></svg></div>
 <div class="app"><svg width="34" height="34" viewBox="0 0 34 34"><path fill="#3a9ad8" d="M31 6h3v7h-3z"/><path fill="#f39a28" d="M31 14h3v7h-3z"/><path fill="#3db45a" d="M31 22h3v7h-3z"/><rect x="1" y="1" width="31" height="32" rx="6" fill="#b28245"/><g fill="none" stroke="#83602f" stroke-width="1.200"><circle cx="17" cy="17" r="10"/><circle cx="17" cy="14" r="4"/><path d="M9 23c3-5 13-5 16 0"/></g></svg></div>
 <div class="app"><svg width="34" height="34" viewBox="0 0 34 34"><rect x="1" y="1" width="32" height="32" rx="7" fill="#fafafa"/><circle cx="7" cy="9" r="2.500" fill="#2a84f0"/><circle cx="7" cy="17" r="2.500" fill="#ef3b42"/><circle cx="7" cy="25" r="2.500" fill="#f8961d"/><path stroke="#ccc" d="M13 9.500h17M13 17.500h17M13 25.500h17"/></svg></div>
 <div class="app"><svg width="34" height="34" viewBox="0 0 34 34"><rect x="1" y="1" width="32" height="32" rx="7" fill="#f2f1ee"/><path fill="#fbc90e" d="M1 9V8a7 7 0 0 1 7-7h18a7 7 0 0 1 7 7v1z"/><path stroke="#ccc" d="M1 9.500h32M4 17.500h26M4 25.500h26"/></svg></div>
 <div class="app run"><svg width="34" height="34" viewBox="0 0 34 34"><rect x="1" y="1" width="32" height="32" rx="7" fill="#1b1f20"/><path fill="#fff" d="M11 10c0 2-1 3-3 3 0-2 1-3 3-3zM13 15c-2 1-1 4 1 4-1 3-2 5-4 4-1-.5-2-.5-3 0-3 1-5-7-2-9 2-1 3 0 4 0s3-1 4 1z"/><text x="15" y="23" font-size="13" font-weight="500" fill="#fff">tv</text></svg></div>
 <div class="app"><svg width="34" height="34" viewBox="0 0 34 34"><rect x="1" y="1" width="32" height="32" rx="7" fill="#202124"/><path stroke="#dc3a48" stroke-width="2" d="M5 15v4m3-7v10m3-14v18m3-10v4"/><path stroke="#2e9df0" stroke-width="1.500" d="M17 4v26"/><path stroke="#555" stroke-width="2" d="M21 14v6m3-9v12m3-9v6"/></svg></div>
 <div class="app run"><svg width="34" height="34" viewBox="0 0 34 34"><rect x="1" y="1" width="32" height="32" rx="7" fill="#fa2c50"/><path fill="#fff" d="M12 8 25 5v17c0 6-7 5-7 2 0-2 2-3 5-3V11l-9 2v12c0 6-7 5-7 2 0-2 2-3 5-3z"/></svg></div>
 <div class="app run"><svg width="34" height="34" viewBox="0 0 34 34"><rect x="1" y="1" width="32" height="32" rx="7" fill="#a526e0"/><g fill="none" stroke="#fff" stroke-width="1.800"><path d="M11 26a11 11 0 1 1 12 0"/><path d="M13 21a6.500 6.500 0 1 1 8 0"/></g><circle cx="17" cy="15.500" r="3" fill="#fff"/><rect x="14.500" y="19.500" width="5" height="10" rx="2.500" fill="#fff"/></svg></div>
 <div class="app"><svg width="34" height="34" viewBox="0 0 34 34"><rect x="1" y="1" width="32" height="32" rx="7" fill="#fd8511"/><path fill="#fff" d="M6 10c4-2 8-2 10.500 1v15C14 23 10 23 6 25zM28 10c-4-2-8-2-10.500 1v15c2.500-3 6.500-3 10.500-1z"/></svg></div>
 <div class="app"><svg width="34" height="34" viewBox="0 0 34 34"><rect x="1" y="1" width="32" height="32" rx="7" fill="#1590f8"/><g stroke="#fff" stroke-width="2.600" stroke-linecap="round"><path d="m15 7 10 18M19 7 9 23M6 21h13M25 21h3M8 25l-1 2"/></g></svg></div>
 <div class="app"><svg width="34" height="34" viewBox="0 0 34 34"><rect x="1" y="1" width="32" height="32" rx="7" fill="#b4b5b8"/><g fill="none" stroke="#444446"><circle cx="17" cy="17" r="13.500" stroke-width="2" stroke-dasharray="1.500 1"/><circle cx="17" cy="17" r="11" stroke-width="2"/><circle cx="17" cy="17" r="7.500" stroke-width="1"/><circle cx="17" cy="17" r="2.500" stroke-width="2"/><path stroke-width="2" d="M20 17h8M15.500 19.500l-4 6M15.500 14.500l-4-6"/></g></svg></div>
 <div class="app run"><svg width="34" height="34" viewBox="0 0 34 34"><rect x="1" y="1" width="32" height="32" rx="7" fill="#f1f1f1"/><circle cx="17" cy="17" r="13.500" fill="#1d94f3"/><circle cx="17" cy="17" r="12" fill="none" stroke="#bfe0fb" stroke-dasharray=".7 1.500" stroke-width="2"/><path fill="#e8383c" d="m27 9-12 6 4 4z"/><path fill="#fff" d="m7 25 12-6-4-4z"/></svg></div>
 <div class="app run"><svg width="34" height="34" viewBox="0 0 34 34"><rect x="1" y="1" width="32" height="32" rx="7" fill="#fafafa"/><path fill="#e33b2e" d="M17 17 5.300 10.200a13.500 13.500 0 0 1 23.400 0z"/><path fill="#fbc116" d="M17 17l11.700-6.800A13.500 13.500 0 0 1 17 30.500z"/><path fill="#2da94f" d="M17 17v13.500A13.500 13.500 0 0 1 5.300 10.200z"/><path fill="#e33b2e" d="M17 10.500h11.900L23 17z"/><circle cx="17" cy="17" r="6.500" fill="#fff"/><circle cx="17" cy="17" r="5" fill="#3b78e7"/></svg></div>
 <div class="app"><svg style="margin-top:-2px" width="34" height="38" viewBox="0 0 34 38"><path fill="#f57c14" d="m5 24-4 13h32l-4-13z"/><path fill="#f88a1b" d="M15 0h4l8 28c-4 4-16 4-20 0z"/><path fill="#eee" d="M13.500 6h7l2 7c-3 2-8 2-11 0zM10 18c4 2 10 2 14 0l2 6c-5 3-13 3-18 0z"/></svg></div>
 <div class="app"><svg width="34" height="34" viewBox="0 0 34 34"><rect x="1" y="1" width="32" height="32" rx="7" fill="#faf3e6"/><path fill="#d99a67" d="M7 5h10v15H7z"/><path fill="#e4e4e4" d="M12 7h12l4 4v9H12z"/><path fill="#e69550" d="M6 18h22v11H6z"/><path stroke="#b86c34" d="M6 22.500h22"/></svg></div>
 <div class="app run"><svg width="34" height="34" viewBox="0 0 34 34"><rect x="1" y="1" width="32" height="32" rx="7" fill="#fafafa"/><path fill="#2b8ae4" d="M10 6h18v8H10z"/><path fill="#1d5fc0" d="M10 13h18v7H10z"/><path fill="#123f91" d="M10 20h18v8H10z"/><path fill="#185abd" d="M4 11h13v13H4z"/><text x="10.500" y="21" font-size="10" font-weight="700" fill="#fff" text-anchor="middle">W</text></svg></div>
 <div class="app run"><svg width="34" height="34" viewBox="0 0 34 34"><rect x="1" y="1" width="32" height="32" rx="7" fill="#fafafa"/><path fill="#21a366" d="M10 6h9v8h-9z"/><path fill="#33c481" d="M19 6h9v8h-9z"/><path fill="#107c41" d="M10 14h18v7H10z"/><path fill="#185c37" d="M10 21h18v7H10z"/><path fill="#107c41" d="M4 11h13v13H4z"/><text x="10.500" y="21" font-size="10" font-weight="700" fill="#fff" text-anchor="middle">X</text></svg></div>
 <div class="app run"><svg width="34" height="34" viewBox="0 0 34 34"><rect x="1" y="1" width="32" height="32" rx="7" fill="#fafafa"/><circle cx="18" cy="17" r="11" fill="#e8552f"/><path fill="#ff8f6b" d="M18 6a11 11 0 0 1 11 11H18z"/><path fill="#c1301c" d="M4 11h13v13H4z"/><text x="10.500" y="21" font-size="10" font-weight="700" fill="#fff" text-anchor="middle">P</text></svg></div>
 <div class="app run"><svg width="34" height="34" viewBox="0 0 34 34"><rect x="1" y="1" width="32" height="32" rx="7" fill="#c60c0c"/><path fill="none" stroke="#fff" stroke-width="1.800" d="M16 8c3 0 1 8-2 13s-6 7-6 5 6-5 12-5 8 2 6 3-8-3-10-9c-1-4-1-7 0-7z"/></svg></div>
 <div class="app run"><svg width="34" height="34" viewBox="0 0 34 34"><rect x="2" y="2" width="30" height="30" rx="7" fill="#1c1c1d" stroke="#b6bcc3" stroke-width="1.500"/><text x="6" y="13" font-size="8" font-weight="700" fill="#fff" font-family="Liberation Mono,monospace">&gt;_</text></svg></div>
 </div>
 <div class="dk d-flex align-items-start">
  <span style="width:1px;height:37px;background:#77777c;margin:5px 17px 0 9px"></span>
  <svg style="margin-top:2px" width="26" height="38" viewBox="0 0 26 38"><path fill="#eee" d="M0 2h26v36H0z"/><path fill="#555" d="M7 0h12v3H7z"/><path stroke="#aaa" stroke-dasharray="5 1 3 1" d="M3 7.500h12M3 11.500h19M3 14.500h19M3 17.500h15M3 21.500h19M3 25.500h19M3 29.500h19M3 33.500h12"/></svg>
  <svg style="margin:2px 0 0 15px" width="28" height="38" viewBox="0 0 28 38"><path fill="#77787c" d="M1 7h26l-4 30H5z"/><path fill="#a5a6aa" opacity=".6" d="M5 10h5l1 26H8zM15 10h6l-3 26h-3z"/><path fill="#e8e8e8" d="m1 7 4-5 5 2 4-4 5 3 5 0 3 5-5 3H6z"/><path fill="#444" d="m8 5 4 3 3-3-2 5zM18 4l4 3-4 2z"/><path fill="#35a06a" d="m11 3 3-2 1 3z"/></svg>
 </div>
</footer>
<div class="wm wm-a" dir="rtl">مستقل</div><div class="wm wm-b">mostaql.com</div>
</body>
</html>
